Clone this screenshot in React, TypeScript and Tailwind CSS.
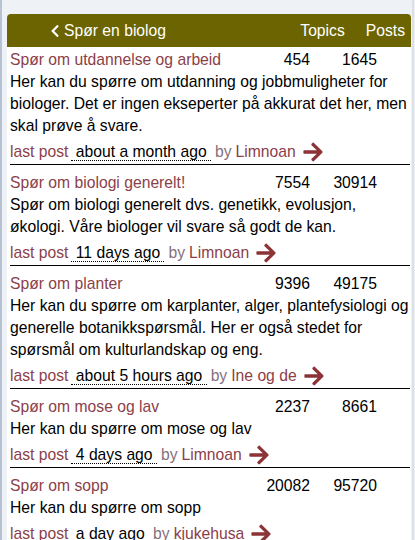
import { FaArrowRight, FaChevronLeft } from "react-icons/fa";

type Forum = {
  title: string;
  topics: string;
  posts: string;
  desc: string;
  when: string;
  by: string;
};

const forums: Forum[] = [
  {
    title: "Spør om utdannelse og arbeid",
    topics: "454",
    posts: "1645",
    desc: "Her kan du spørre om utdanning og jobbmuligheter for biologer. Det er ingen ekseperter på akkurat det her, men skal prøve å svare.",
    when: "about a month ago",
    by: "Limnoan",
  },
  {
    title: "Spør om biologi generelt!",
    topics: "7554",
    posts: "30914",
    desc: "Spør om biologi generelt dvs. genetikk, evolusjon, økologi. Våre biologer vil svare så godt de kan.",
    when: "11 days ago",
    by: "Limnoan",
  },
  {
    title: "Spør om planter",
    topics: "9396",
    posts: "49175",
    desc: "Her kan du spørre om karplanter, alger, plantefysiologi og generelle botanikkspørsmål. Her er også stedet for spørsmål om kulturlandskap og eng.",
    when: "about 5 hours ago",
    by: "Ine og de",
  },
  {
    title: "Spør om mose og lav",
    topics: "2237",
    posts: "8661",
    desc: "Her kan du spørre om mose og lav",
    when: "4 days ago",
    by: "Limnoan",
  },
  {
    title: "Spør om sopp",
    topics: "20082",
    posts: "95720",
    desc: "Her kan du spørre om sopp",
    when: "a day ago",
    by: "kjukehusa",
  },
];

function ForumRow({ forum, first }: { forum: Forum; first: boolean }) {
  return (
    <div className={`ml-[3px] mr-[1px] border-b border-black ${first ? "pt-[2px]" : "pt-[7px]"}`}>
      <div className="flex h-[22px] items-center">
        <span className="flex-1 text-[#8b4049]">{forum.title}</span>
        <span className="w-[50px] text-right">{forum.topics}</span>
        <span className="w-[67px] text-right">{forum.posts}</span>
        <span className="w-[33px]" />
      </div>
      <p className="leading-[22px] text-black">{forum.desc}</p>
      <div className="flex h-[27px] items-center pt-[3px] text-[#8b4049]">
        <span>last post</span>
        <span className="ml-[3px] border-b border-dotted border-black leading-[16px] text-black">
          {"\u00a0"}
          {forum.when}
          {"\u00a0"}
        </span>
        <span className="ml-[4px] text-[#85707c]">by</span>
        <span className="ml-[4px]">{forum.by}</span>
        <FaArrowRight className="ml-[6px] text-[22px] text-[#8b3336]" />
      </div>
    </div>
  );
}

export default function App() {
  return (
    <div
      className="flex h-[540px] w-[415px] overflow-hidden bg-[#eef1f5] text-[15.7px]"
      style={{ fontFamily: '"Liberation Sans", Arial, sans-serif' }}
    >
      <div className="w-[2px] shrink-0 bg-[#b7c3d3]" />
      <div className="ml-[5px] mt-[14px] w-[404px] shrink-0 overflow-hidden rounded-t-[4px] bg-white">
        <div className="flex h-[33px] items-center bg-[#6b6400] text-[15.7px] text-white">
          <FaChevronLeft className="ml-[41px] text-[14px]" />
          <span className="ml-[2px]">Spør en biolog</span>
          <span className="ml-auto">Topics</span>
          <span className="ml-[21px] mr-[6px]">Posts</span>
        </div>
        {forums.map((f, i) => (
          <ForumRow key={f.title} forum={f} first={i === 0} />
        ))}
      </div>
      <div className="ml-[1px] w-[2px] shrink-0 bg-[#dde1e6]" />
    </div>
  );
}
